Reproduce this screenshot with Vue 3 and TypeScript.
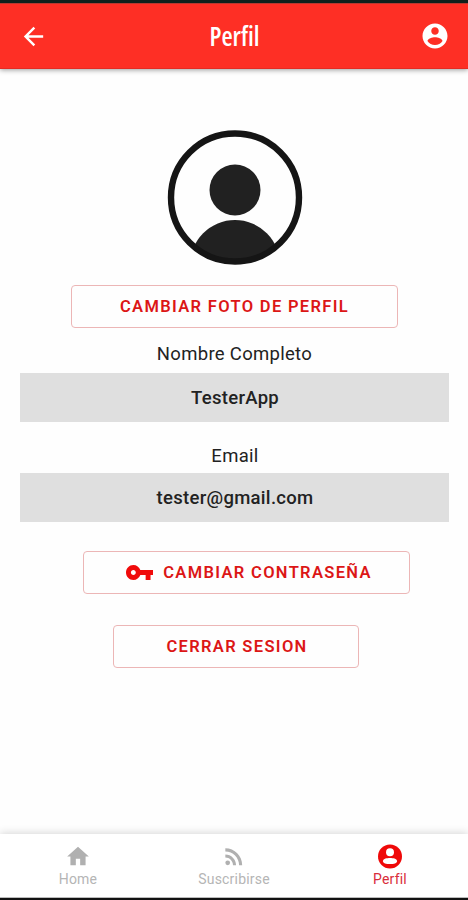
<script setup lang="ts">
interface Field {
  label: string
  value: string
}
interface Tab {
  id: string
  label: string
  active: boolean
}

const fields: Field[] = [
  { label: 'Nombre Completo', value: 'TesterApp' },
  { label: 'Email', value: 'tester@gmail.com' },
]

const tabs: Tab[] = [
  { id: 'home', label: 'Home', active: false },
  { id: 'feed', label: 'Suscribirse', active: false },
  { id: 'profile', label: 'Perfil', active: true },
]
</script>

<template>
  <div class="screen">
    <header class="bar">
      <svg class="back" viewBox="0 0 24 24"><path d="M20 11H7.83l5.59-5.59L12 4l-8 8 8 8 1.41-1.41L7.83 13H20v-2z" /></svg>
      <h1 class="title">Perfil</h1>
      <svg class="account" viewBox="0 0 24 24"><path d="M12 2C6.48 2 2 6.48 2 12s4.48 10 10 10 10-4.480 10-10S17.520 2 12 2zm0 3c1.660 0 3 1.340 3 3s-1.340 3-3 3-3-1.340-3-3 1.340-3 3-3zm0 14.200c-2.500 0-4.710-1.280-6-3.220.030-1.990 4-3.080 6-3.080 1.990 0 5.970 1.090 6 3.080-1.290 1.940-3.500 3.220-6 3.220z" /></svg>
    </header>

    <main class="content">
      <svg class="avatar" viewBox="0 0 136 136">
        <defs>
          <clipPath id="ring"><circle cx="68" cy="68" r="66" /></clipPath>
        </defs>
        <circle cx="68" cy="60" r="25.500" fill="#212121" />
        <circle cx="68" cy="135" r="45" fill="#212121" clip-path="url(#ring)" />
        <circle cx="68" cy="67.500" r="64" fill="none" stroke="#151515" stroke-width="6.400" />
      </svg>

      <button class="btn photo"><span>CAMBIAR FOTO DE PERFIL</span></button>

      <section v-for="f in fields" :key="f.label" class="field">
        <div class="label"><span>{{ f.label }}</span></div>
        <div class="value"><span>{{ f.value }}</span></div>
      </section>

      <button class="btn password">
        <svg class="key" viewBox="1 6 22 12" preserveAspectRatio="none"><path d="M12.650 10C11.830 7.670 9.610 6 7 6c-3.310 0-6 2.690-6 6s2.690 6 6 6c2.610 0 4.830-1.670 5.650-4H17v4h4v-4h2v-4H12.650zM7 14c-1.100 0-2-.9-2-2s.9-2 2-2 2 .9 2 2-.9 2-2 2z" /></svg>
        <span>CAMBIAR CONTRASEÑA</span>
      </button>
      <button class="btn logout"><span>CERRAR SESION</span></button>
    </main>

    <nav class="tabs">
      <a v-for="t in tabs" :key="t.id" class="tab" :class="{ active: t.active }">
        <svg v-if="t.id === 'home'" viewBox="0 0 24 24"><path d="M10 20v-6h4v6h5v-8h3L12 3 2 12h3v8z" /></svg>
        <svg v-else-if="t.id === 'feed'" viewBox="0 0 24 24"><circle cx="6.180" cy="17.820" r="2.180" /><path d="M4 4.440v2.830c7.030 0 12.730 5.700 12.730 12.730h2.830c0-8.590-6.970-15.560-15.560-15.560zm0 5.660v2.830c3.900 0 7.070 3.170 7.070 7.070h2.830c0-5.470-4.430-9.900-9.900-9.900z" /></svg>
        <svg v-else class="person" viewBox="0 0 24 24"><circle cx="12" cy="12" r="12" /><circle cx="12" cy="7.800" r="4" fill="#fff" /><path fill="#fff" d="M4.900 16.400C5.200 14.200 9 13.500 12 13.500s6.800.7 7.100 2.900c0 2.300-3.300 3.200-7.100 3.200s-7.100-.9-7.100-3.200z" /></svg>
        <span>{{ t.label }}</span>
      </a>
    </nav>
  </div>
</template>

<style>
body {
  margin: 0;
  background: #fefefe;
}
</style>

<style scoped>
.screen {
  box-sizing: border-box;
  width: 468px;
  height: 900px;
  display: flex;
  flex-direction: column;
  border-top: 3px solid #10201c;
  border-bottom: 2px solid #111;
  background: #fefefe;
  font-family: Roboto, "Liberation Sans", sans-serif;
  overflow: hidden;
}
.bar {
  box-sizing: border-box;
  height: 66px;
  flex: none;
  padding: 0 18px 0 19px;
  display: grid;
  grid-template-columns: 30px 1fr 30px;
  align-items: center;
  background: #fe2f25;
  border-top: 1px solid #b8382f;
  border-bottom: 1px solid #e52b23;
  box-shadow: 0 1px 5px rgba(0, 0, 0, 0.4);
  color: #fff;
}
.bar svg {
  fill: #fff;
}
.back {
  width: 29px;
  height: 29px;
}
.account {
  width: 30px;
  height: 30px;
}
.title {
  margin: 0;
  text-align: center;
  font-family: "Open Sans", Roboto, sans-serif;
  font-size: 26.5px;
  line-height: 30px;
  font-weight: 650;
  font-stretch: 75%;
  transform: scaleX(0.97);
}
.content {
  flex: 1;
  display: flex;
  flex-direction: column;
  align-items: center;
  padding: 61px 19px 0 20px;
}
.avatar {
  width: 136px;
  height: 136px;
  flex: none;
}
.btn {
  box-sizing: border-box;
  flex: none;
  height: 43px;
  padding: 0;
  display: flex;
  align-items: center;
  justify-content: center;
  border: 1px solid #ecb6b6;
  border-radius: 4px;
  background: #fefefe;
  color: #dc1616;
  font: 600 16.5px/20px Roboto, "Liberation Sans", sans-serif;
  letter-spacing: 1.33px;
}
.photo {
  width: 327px;
  margin-top: 19px;
}
.field {
  width: 100%;
  text-align: center;
  color: #222;
  font-size: 18.5px;
  letter-spacing: 0.3px;
}
.label {
  height: 45px;
  line-height: 53px;
}
.value {
  box-sizing: border-box;
  height: 49px;
  padding-left: 1px;
  line-height: 51px;
  background: #dfdfdf;
  font-weight: 500;
}
.field + .field {
  padding-top: 6px;
}
.field + .field .label {
  padding-left: 1px;
  line-height: 56px;
}
.password {
  width: 327px;
  margin: 29px 0 0 24px;
  padding-left: 5px;
  gap: 10px;
}
.key {
  width: 27px;
  height: 15px;
  fill: #f00b0b;
}
.logout {
  width: 246px;
  margin: 31px 0 0 3px;
  padding-left: 2px;
}
.tabs {
  flex: none;
  height: 63px;
  display: grid;
  grid-template-columns: repeat(3, 156px);
  background: #fff;
  border-bottom: 1px solid #bbb;
  box-shadow: 0 -1px 8px rgba(0, 0, 0, 0.16);
}
.tab {
  display: flex;
  flex-direction: column;
  align-items: center;
  padding-top: 9px;
  color: #b5b5b5;
  font-size: 14px;
  line-height: 18px;
  letter-spacing: 0.2px;
}
.tab svg {
  width: 26px;
  height: 27px;
  fill: #b0b0b0;
}
.tab.active {
  color: #d92c3a;
}
.tab .person {
  width: 24px;
  fill: #ef0909;
}
</style>
